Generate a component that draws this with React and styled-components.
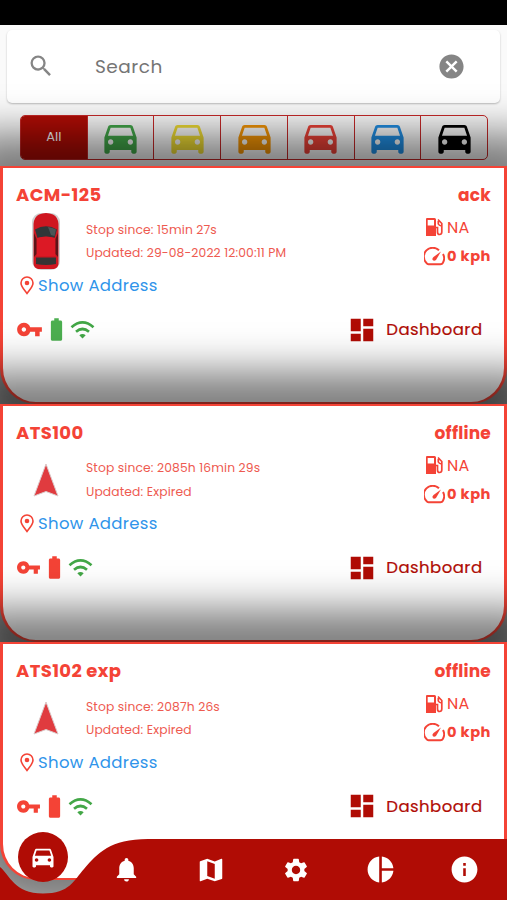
import React from "react";
import styled, { createGlobalStyle } from "styled-components";
import {
  MdSearch,
  MdCancel,
  MdDirectionsCar,
  MdVpnKey,
  MdBatteryFull,
  MdDashboard,
  MdNotifications,
  MdMap,
  MdSettings,
  MdPieChart,
  MdInfo
} from "react-icons/md";

const RED = "#f44336";
const DARK_RED = "#b00c05";

const GlobalStyle = createGlobalStyle`
  * {
    box-sizing: border-box;
  }
  body {
    margin: 0;
    font-family: Poppins, Inter, "Open Sans", sans-serif;
    font-feature-settings: "cv11";
  }
`;

const Screen = styled.div`
  position: relative;
  display: flex;
  flex-direction: column;
  width: 507px;
  height: 900px;
  overflow: hidden;
  background: #fafafa;
`;

const StatusBar = styled.div`
  flex: none;
  height: 25px;
  background: #000;
`;

const SearchBar = styled.div`
  flex: none;
  display: flex;
  align-items: center;
  height: 73px;
  margin: 4.5px 7px 0;
  padding: 0 34px 0 20px;
  border-radius: 5px;
  background: #fff;
  color: #858585;
  box-shadow: 0 1px 2px rgba(0, 0, 0, 0.25);
`;

const Placeholder = styled.span`
  flex: 1;
  margin-left: 40px;
  font-size: 18.5px;
  letter-spacing: 0.5px;
  color: #757575;
`;

const Filters = styled.div`
  flex: none;
  display: flex;
  height: 45px;
  margin: 12px 19px 6.1px 20px;
  border: 1.5px solid #c62828;
  border-radius: 5px;
  overflow: hidden;
`;

const FilterTab = styled.div`
  flex: 1;
  display: flex;
  align-items: center;
  justify-content: center;
  border-left: ${props => (props.$first ? "none" : "1px solid #c62828")};
  background: ${props => (props.$active ? DARK_RED : "transparent")};
  color: ${props => props.$color};
  font-size: 13px;
`;

const Card = styled.div`
  flex: none;
  height: 238.3px;
  padding: 16px 13px 0;
  border: solid ${RED};
  border-width: 2px 3px;
  border-radius: 0 0 36px 36px;
  background: #fff;
  color: ${RED};
  box-shadow: 0 0 40px 33px rgba(0, 0, 0, 0.5);
`;

const Row = styled.div`
  display: flex;
  justify-content: space-between;
`;

const Title = styled.div`
  height: 29px;
  line-height: 22px;
  font-size: 18px;
  font-weight: 700;
  letter-spacing: 0.4px;
`;

const Status = styled(Title)`
  line-height: 23px;
  font-size: 17px;
  letter-spacing: 0.2px;
`;

const Marker = styled.div`
  display: flex;
  align-items: center;
  justify-content: center;
  width: 60px;
  height: 60px;
  margin: -2px 0 2px;
`;

const Times = styled.div`
  flex: 1;
  padding: 5.5px 0 0 10px;
  font-size: 12.3px;
  line-height: 23.2px;
  white-space: nowrap;
  color: #ee5a50;
  letter-spacing: 0.13px;
`;

const Stats = styled.div`
  width: 66px;
`;

const Stat = styled.div`
  display: flex;
  align-items: center;
  height: 29px;
  font-size: ${props => (props.$bold ? "14.6px" : "16px")};
  font-weight: ${props => (props.$bold ? 700 : 400)};
  letter-spacing: ${props => (props.$bold ? "0.5px" : "0.2px")};
  white-space: nowrap;
  svg {
    flex: none;
    margin-left: ${props => (props.$bold ? "-1px" : "0")};
    margin-right: 2px;
  }
`;

const Address = styled.div`
  display: flex;
  align-items: center;
  height: 26px;
  margin-left: 4px;
  gap: 4px;
  font-size: 16.5px;
  letter-spacing: 0.33px;
  color: #2f94ea;
`;

const Footer = styled.div`
  display: flex;
  align-items: center;
  justify-content: space-between;
  height: 30px;
  margin-top: 16px;
  padding-right: 8.5px;
`;

const Sensors = styled.div`
  display: flex;
  align-items: center;
`;

const DashboardLink = styled.div`
  display: flex;
  align-items: center;
  gap: 9px;
  font-size: 16.5px;
  font-weight: 400;
  letter-spacing: 0.45px;
  -webkit-text-stroke: 0.2px ${DARK_RED};
  color: ${DARK_RED};
`;

const NavBar = styled.div`
  position: absolute;
  left: 0;
  bottom: 0;
  width: 507px;
  height: 68px;
`;

const NavShape = styled.svg`
  position: absolute;
  left: 0;
  bottom: 0;
`;

const NavItems = styled.div`
  position: relative;
  display: grid;
  grid-template-columns: repeat(6, 1fr);
  height: 68px;
  color: #fff;
`;

const NavItem = styled.div`
  display: flex;
  align-items: center;
  justify-content: center;
  padding-top: 7px;
`;

const ActiveItem = styled.div`
  align-self: start;
  display: flex;
  align-items: center;
  justify-content: center;
  width: 50px;
  height: 50px;
  margin-left: 18px;
  border-radius: 50%;
  background: ${DARK_RED};
`;

const CarIcon = () => (
  <svg width="30" height="60" viewBox="0 0 30 60">
    <rect x="1" y="2" width="28" height="57" rx="9" fill="#777" opacity="0.35" />
    <path
      d="M8 3.500Q15 0.500 22 3.500Q27 6 27.500 13V53Q27 57 23 58H7Q3 57 2.500 53V13Q3 6 8 3.500Z"
      fill="#cf1620"
    />
    <path d="M4 18.500Q15 12 26 18.500L23.500 27Q15 24 6.500 27Z" fill="#303638" />
    <path d="M17 16Q22 16.500 25 18.500L23.500 25L20 24Z" fill="#4b5557" />
    <path d="M3 22L5.500 28V43L3 46ZM27 22L24.500 28V43L27 46Z" fill="#5c1418" />
    <path d="M6 27Q15 24.500 24 27V45H6Z" fill="#dc1925" />
    <path d="M5 46.500H25V53Q15 55 5 53Z" fill="#343434" />
  </svg>
);

const ArrowIcon = () => (
  <svg width="30" height="42" viewBox="0 0 30 42">
    <path
      d="M15 6L27 38L15 33.500L3 38Z"
      fill="#e03b3f"
      stroke="#dccaca"
      strokeWidth="1"
    />
  </svg>
);

const PinIcon = () => (
  <svg width="14" height="19" viewBox="0 0 14 19" fill="none">
    <path
      d="M7 17.500C4 13.500 1 10.500 1 7A6 6 0 0 1 13 7C13 10.500 10 13.500 7 17.500Z"
      stroke={RED}
      strokeWidth="1.6"
    />
    <circle cx="7" cy="7" r="2.300" fill={RED} />
  </svg>
);

const FuelIcon = () => (
  <svg width="20" height="20" viewBox="0 0 20 20" fill="none">
    <path
      fillRule="evenodd"
      d="M2 1H9.500Q11 1 11 2.500V19H1V2Q1 1 2 1ZM2.700 3V8.500H9V3Z"
      fill={RED}
    />
    <path
      d="M11 10.500H12.500V15Q12.500 17.500 14.600 17.500T16.800 15V6.500L13 2.500M13.300 4V7Q14 8.500 16.500 9"
      stroke={RED}
      strokeWidth="1.7"
    />
  </svg>
);

const SpeedIcon = () => (
  <svg width="21" height="19" viewBox="0 0 21 19" fill="none">
    <path
      d="M15 3.300A8.800 8.800 0 0 0 2.500 16Q3.200 17.200 4.500 17.200H16.500Q18.200 17.200 18.800 16A9 9 0 0 0 19 7"
      stroke={RED}
      strokeWidth="1.900"
    />
    <path d="M17 4.500L12 13Q10 14.500 8.700 13Q7.800 11.500 9.500 10Z" fill={RED} />
  </svg>
);

const WifiIcon = () => (
  <svg width="25" height="19" viewBox="0 0 25 19" fill="none" stroke="#43a747">
    <path d="M1.500 7.200Q12.500 -2.300 23.500 7.200" strokeWidth="2.700" />
    <path d="M6 11.700Q12.500 6.300 19 11.700" strokeWidth="2.700" />
    <path d="M9.300 15.200Q12.500 12.800 15.700 15.200L12.500 18.500Z" fill="#43a747" stroke="none" />
  </svg>
);

const filterColors = [
  "#43a84a",
  "#f0dd35",
  "#f59505",
  "#ed4238",
  "#218fe5",
  "#000"
];

const vehicles = [
  {
    name: "ACM-125",
    status: "ack",
    since: "15min 27s",
    updated: "29-08-2022 12:00:11 PM",
    online: true
  },
  {
    name: "ATS100",
    status: "offline",
    since: "2085h 16min 29s",
    updated: "Expired"
  },
  {
    name: "ATS102 exp",
    status: "offline",
    since: "2087h 26s",
    updated: "Expired"
  }
];

const VehicleCard = ({ vehicle }) => (
  <Card>
    <Row>
      <Title>{vehicle.name}</Title>
      <Status>{vehicle.status}</Status>
    </Row>
    <Row>
      <Marker>{vehicle.online ? <CarIcon /> : <ArrowIcon />}</Marker>
      <Times>
        <div>Stop since: {vehicle.since}</div>
        <div>Updated: {vehicle.updated}</div>
      </Times>
      <Stats>
        <Stat>
          <FuelIcon />
          NA
        </Stat>
        <Stat $bold>
          <SpeedIcon />0 kph
        </Stat>
      </Stats>
    </Row>
    <Address>
      <PinIcon />
      Show Address
    </Address>
    <Footer>
      <Sensors>
        <MdVpnKey size={vehicle.online ? 27 : 25} />
        <MdBatteryFull
          size={27}
          color={vehicle.online ? "#4caf50" : RED}
        />
        <WifiIcon />
      </Sensors>
      <DashboardLink>
        <MdDashboard size={30} />
        Dashboard
      </DashboardLink>
    </Footer>
  </Card>
);

const App = () => (
  <Screen>
    <GlobalStyle />
    <StatusBar />
    <SearchBar>
      <MdSearch size={28} />
      <Placeholder>Search</Placeholder>
      <MdCancel size={29} />
    </SearchBar>
    <Filters>
      <FilterTab $first $active $color="#fff">
        All
      </FilterTab>
      {filterColors.map(color => (
        <FilterTab key={color} $color={color}>
          <MdDirectionsCar size={43} />
        </FilterTab>
      ))}
    </Filters>
    {vehicles.map(vehicle => (
      <VehicleCard key={vehicle.name} vehicle={vehicle} />
    ))}
    <NavBar>
      <NavShape width="507" height="61" viewBox="0 0 507 61">
        <path
          d="M0 28C10 36 14 54.500 43 54.500C70 54.500 74 41 84 30C98 14 110 0 148 0H507V61H0Z"
          fill={DARK_RED}
        />
      </NavShape>
      <NavItems>
        <ActiveItem>
          <MdDirectionsCar size={28} />
        </ActiveItem>
        <NavItem>
          <MdNotifications size={29} />
        </NavItem>
        <NavItem>
          <MdMap size={30} />
        </NavItem>
        <NavItem>
          <MdSettings size={28} />
        </NavItem>
        <NavItem>
          <MdPieChart size={31} />
        </NavItem>
        <NavItem>
          <MdInfo size={31} />
        </NavItem>
      </NavItems>
    </NavBar>
  </Screen>
);

export default App;
